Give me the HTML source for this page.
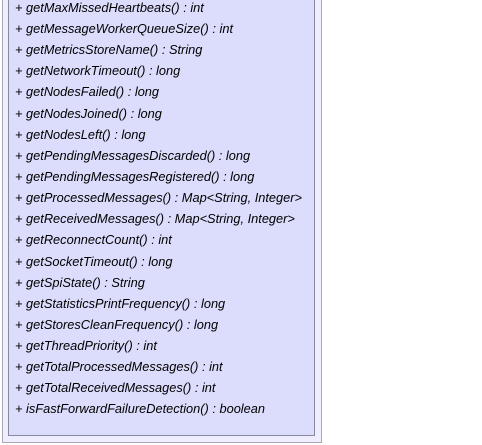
<!DOCTYPE html>
<html><head><style>
body{margin:0;width:482px;height:445px;background:#fff;position:relative;overflow:hidden;font-family:"Liberation Sans",sans-serif;}
.outer{position:absolute;left:2px;top:-2px;width:320px;height:445px;background:#eeeeff;border:1px solid #a8a8b8;box-sizing:border-box;}
.inner{position:absolute;left:8px;top:-2px;width:307px;height:438px;background:#dcdcfc;border:1px solid #8888a0;box-sizing:border-box;}
.r{position:absolute;left:15px;font-style:italic;font-size:12.8px;color:#000;white-space:nowrap;line-height:14px;}
</style></head><body>
<div class="outer"></div><div class="inner"></div>
<div class="r" style="top:1px">+ getMaxMissedHeartbeats() : int</div>
<div class="r" style="top:22px">+ getMessageWorkerQueueSize() : int</div>
<div class="r" style="top:43px">+ getMetricsStoreName() : String</div>
<div class="r" style="top:64px">+ getNetworkTimeout() : long</div>
<div class="r" style="top:85px">+ getNodesFailed() : long</div>
<div class="r" style="top:107px">+ getNodesJoined() : long</div>
<div class="r" style="top:128px">+ getNodesLeft() : long</div>
<div class="r" style="top:149px">+ getPendingMessagesDiscarded() : long</div>
<div class="r" style="top:170px">+ getPendingMessagesRegistered() : long</div>
<div class="r" style="top:191px">+ getProcessedMessages() : Map&lt;String, Integer&gt;</div>
<div class="r" style="top:212px">+ getReceivedMessages() : Map&lt;String, Integer&gt;</div>
<div class="r" style="top:233px">+ getReconnectCount() : int</div>
<div class="r" style="top:255px">+ getSocketTimeout() : long</div>
<div class="r" style="top:276px">+ getSpiState() : String</div>
<div class="r" style="top:297px">+ getStatisticsPrintFrequency() : long</div>
<div class="r" style="top:318px">+ getStoresCleanFrequency() : long</div>
<div class="r" style="top:339px">+ getThreadPriority() : int</div>
<div class="r" style="top:360px">+ getTotalProcessedMessages() : int</div>
<div class="r" style="top:381px">+ getTotalReceivedMessages() : int</div>
<div class="r" style="top:402px">+ isFastForwardFailureDetection() : boolean</div>
</body></html>
